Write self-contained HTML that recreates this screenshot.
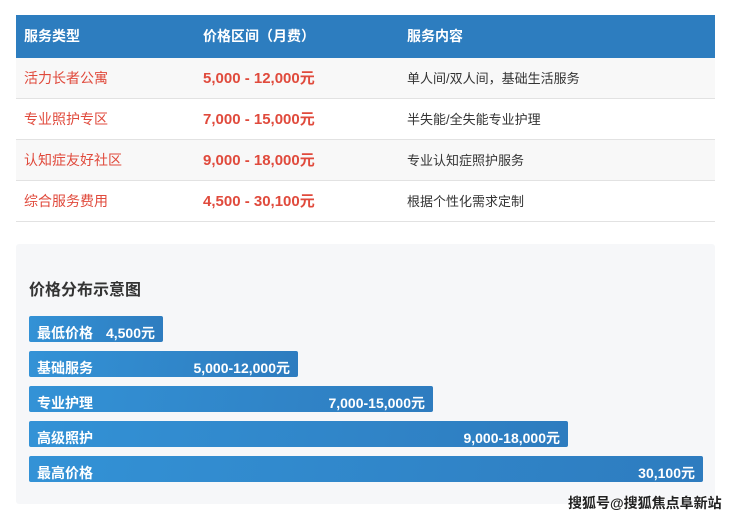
<!DOCTYPE html>
<html><head><meta charset="utf-8"><style>
*{margin:0;padding:0;box-sizing:border-box}
body{width:740px;height:519px;background:#fff;font-family:"Liberation Sans","Noto Sans CJK SC",sans-serif;position:relative;overflow:hidden}
.tbl{position:absolute;left:16px;top:15px;width:699px}
.hd{height:43px;background:#2d7dbf;color:#fff;font-weight:bold;font-size:14px;position:relative}
.row{height:41px;border-bottom:1px solid #e2e2e2;position:relative;font-size:14px}
.row:nth-child(even){background:#f8f8f8}
.c1,.c2,.c3{position:absolute;top:0;line-height:41px;white-space:nowrap}
.hd .c1,.hd .c2,.hd .c3{line-height:43px}
.c1{left:8px}.c2{left:187px}.c3{left:391px}
.row .c1{color:#e04a3c}.row .c2{color:#e04a3c;font-weight:bold;font-size:15px}.row .c3{color:#333;font-size:13px}
.chart{position:absolute;left:16px;top:244px;width:699px;height:260px;background:#f6f7f9;border-radius:3px}
.title{position:absolute;left:13px;top:32px;font-size:16px;font-weight:bold;color:#333}
.bar{position:absolute;left:13px;height:26px;border-radius:2px;background:linear-gradient(100deg,#3392d6,#2e7cbf);color:#fff;font-weight:bold;font-size:14px}
.bar .l{position:absolute;left:8px;top:7px}
.bar .v{position:absolute;right:8px;top:7px}
.wm{position:absolute;left:568px;top:493px;font-size:14px;font-weight:bold;color:#222;text-shadow:0 0 2px #fff,0 0 2px #fff;letter-spacing:0}
</style></head><body>
<div class="tbl">
<div class="hd"><span class="c1">服务类型</span><span class="c2">价格区间（月费）</span><span class="c3">服务内容</span></div>
<div class="row"><span class="c1">活力长者公寓</span><span class="c2">5,000 - 12,000元</span><span class="c3">单人间/双人间，基础生活服务</span></div>
<div class="row"><span class="c1">专业照护专区</span><span class="c2">7,000 - 15,000元</span><span class="c3">半失能/全失能专业护理</span></div>
<div class="row"><span class="c1">认知症友好社区</span><span class="c2">9,000 - 18,000元</span><span class="c3">专业认知症照护服务</span></div>
<div class="row"><span class="c1">综合服务费用</span><span class="c2">4,500 - 30,100元</span><span class="c3">根据个性化需求定制</span></div>
</div>
<div class="chart">
<div class="title">价格分布示意图</div>
<div class="bar" style="top:72px;width:134px"><span class="l">最低价格</span><span class="v">4,500元</span></div>
<div class="bar" style="top:107px;width:269px"><span class="l">基础服务</span><span class="v">5,000-12,000元</span></div>
<div class="bar" style="top:142px;width:404px"><span class="l">专业护理</span><span class="v">7,000-15,000元</span></div>
<div class="bar" style="top:177px;width:539px"><span class="l">高级照护</span><span class="v">9,000-18,000元</span></div>
<div class="bar" style="top:212px;width:674px"><span class="l">最高价格</span><span class="v">30,100元</span></div>
</div>
<div class="wm">搜狐号@搜狐焦点阜新站</div>
</body></html>
